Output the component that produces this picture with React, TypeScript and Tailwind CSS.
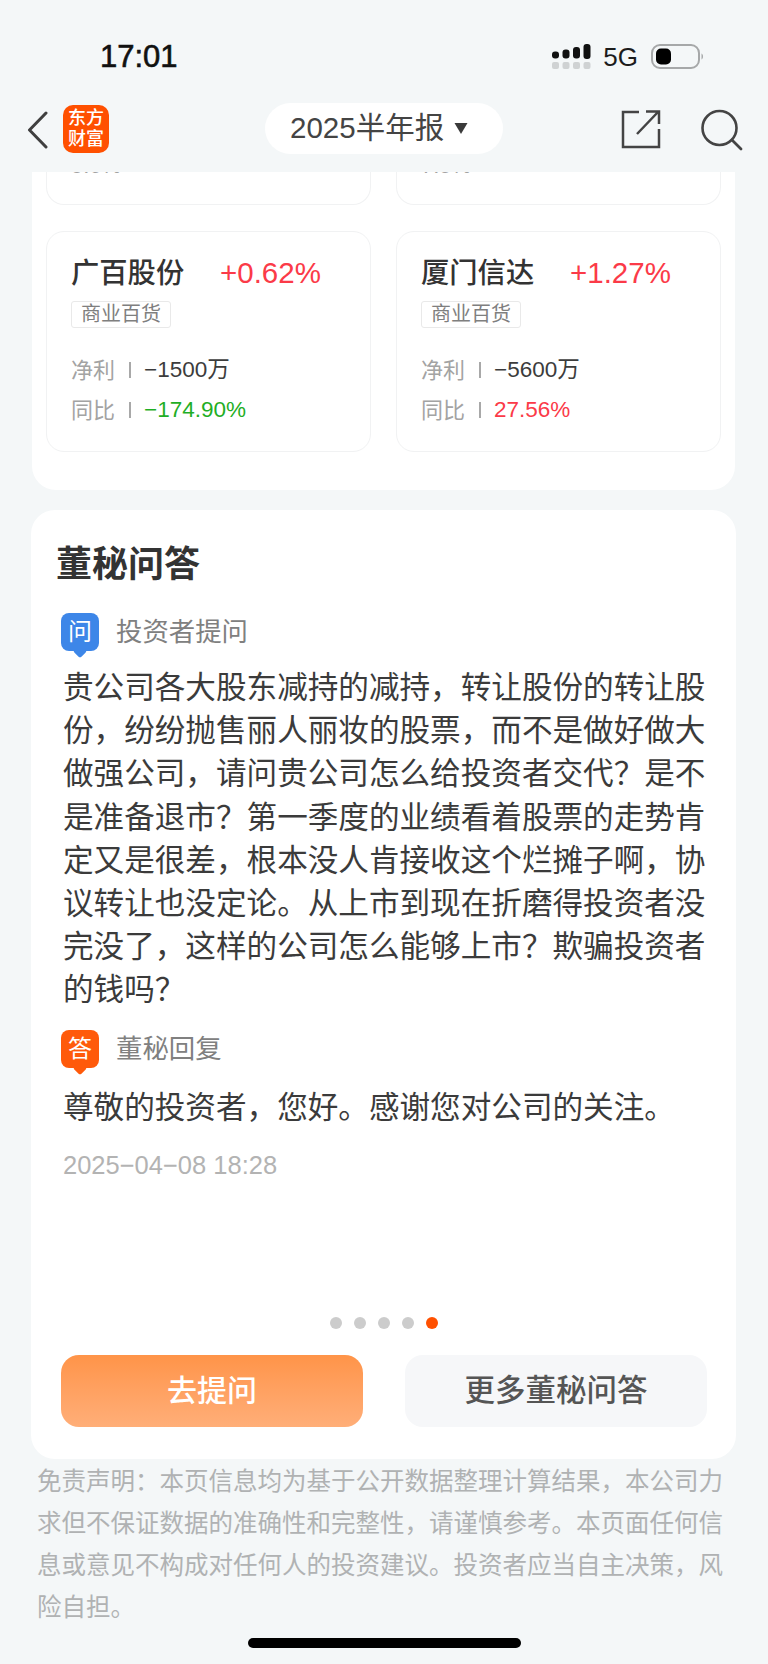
const FONT = "font-['Liberation_Sans','Noto_Sans_CJK_SC',sans-serif]";

const stocks = [
  { name: '广百股份', change: '+0.62%', profit: '−1500万', yoy: '−174.90%', yoyColor: 'text-[#1fae25]' },
  { name: '厦门信达', change: '+1.27%', profit: '−5600万', yoy: '27.56%', yoyColor: 'text-[#fb3a48]' },
];

function StockCard({ stock }: { stock: (typeof stocks)[number] }) {
  return (
    <div className="w-[325px] h-[221px] rounded-[18px] border border-[#f1f2f3] pl-[24px] pt-[24px]">
      <div className="flex items-center h-[34px]">
        <span className="w-[149px] text-[28.3px] leading-[34px] font-medium text-[#333333]">{stock.name}</span>
        <span className="text-[29.5px] leading-[34px] text-[#fb3a48]">{stock.change}</span>
      </div>
      <div className="mt-[11px] w-[100px] h-[27px] rounded-[3px] border border-[#e9e9e9] flex items-center justify-center text-[20px] leading-[25px] text-[#7f7f7f]">
        商业百货
      </div>
      <div className="mt-[22px] flex items-center h-[40px] text-[22.5px]">
        <span className="w-[44px] text-[22px] text-[#a3a3a3]">净利</span>
        <span className="ml-[14px] w-[2px] h-[16px] bg-[#a8a8a8]"></span>
        <span className="ml-[13px] text-[#3c3c3c]">{stock.profit}</span>
      </div>
      <div className="flex items-center h-[40px] text-[22.5px]">
        <span className="w-[44px] text-[22px] text-[#a3a3a3]">同比</span>
        <span className="ml-[14px] w-[2px] h-[16px] bg-[#a8a8a8]"></span>
        <span className={`ml-[13px] ${stock.yoyColor}`}>{stock.yoy}</span>
      </div>
    </div>
  );
}

function BubbleIcon({ char, color }: { char: string; color: string }) {
  return (
    <div className="relative w-[38px] h-[38px] shrink-0">
      <div className={`absolute left-[14px] top-[33px] w-[10px] h-[10px] rotate-45 rounded-[2px] ${color}`}></div>
      <div className={`relative w-[38px] h-[38px] rounded-[8px] flex items-center justify-center text-[24px] leading-none text-white ${color}`}>
        {char}
      </div>
    </div>
  );
}

export default function App() {
  return (
    <div className={`w-[768px] h-[1664px] overflow-hidden bg-[#f4f7f8] ${FONT}`}>
      {/* status bar */}
      <div className="h-[103px] pt-[38px] pl-[100px] pr-[64px] flex items-start justify-between">
        <span className="text-[31px] leading-[38px] font-medium text-[#111111] [-webkit-text-stroke:0.6px_#111111]">17:01</span>
        <div className="flex items-center h-[38px]">
          <svg width="39" height="30" viewBox="0 0 39 30" className="mt-[2px]">
            <rect x="0" y="8.5" width="7" height="7" rx="3" fill="#111" />
            <rect x="10.5" y="6.5" width="7" height="9" rx="3" fill="#111" />
            <rect x="21" y="4" width="7" height="11.5" rx="3" fill="#111" />
            <rect x="31.5" y="1" width="7" height="15" rx="3" fill="#111" />
            <rect x="0" y="19" width="7" height="7" rx="2" fill="#cfd2d3" />
            <rect x="10.5" y="19" width="7" height="7" rx="2" fill="#cfd2d3" />
            <rect x="21" y="19" width="7" height="7" rx="2" fill="#cfd2d3" />
            <rect x="31.5" y="19" width="7" height="7" rx="2" fill="#cfd2d3" />
          </svg>
          <span className="ml-[12px] text-[26px] leading-[30px] text-[#1c1c1c]">5G</span>
          <svg width="53" height="28" viewBox="0 0 53 28" className="ml-[13px]">
            <rect x="1" y="2" width="47" height="23" rx="8" fill="none" stroke="#a6a8a9" strokeWidth="2" />
            <rect x="5" y="5.5" width="15" height="16" rx="5" fill="#000" />
            <path d="M50.5 10.5 C52.5 11.5 52.5 15.5 50.5 16.5 Z" fill="#a6a8a9" />
          </svg>
        </div>
      </div>

      {/* nav bar */}
      <div className="h-[69px] flex items-start">
        <svg width="24" height="38" viewBox="0 0 24 38" className="ml-[26px] mt-[8px]">
          <path d="M20 2 L3.5 19 L20 36" fill="none" stroke="#3f3f3f" strokeWidth="3" strokeLinecap="round" strokeLinejoin="round" />
        </svg>
        <div className="ml-[13px] mt-[2px] w-[46px] h-[48px] rounded-[10px] bg-[#ff5000] flex flex-col items-center justify-center text-white text-[18px] leading-[21px] font-medium">
          <span>东方</span>
          <span>财富</span>
        </div>
        <div className="ml-[156px] w-[238px] h-[51px] rounded-full bg-white flex items-center pl-[25px] text-[29.5px] text-[#444444]">
          <span>2025半年报</span>
          <svg width="14" height="13" viewBox="0 0 14 13" className="ml-[10px]">
            <path d="M0.5 1 H13.5 L7 12 Z" fill="#3a3a3a" />
          </svg>
        </div>
        <svg width="40" height="40" viewBox="0 0 40 40" className="ml-[118px] mt-[6px]">
          <path d="M18 3 H2 V38 H38 V20" fill="none" stroke="#444" strokeWidth="2.5" />
          <path d="M16 25 L37 3 M25 2.5 H38 V15" fill="none" stroke="#444" strokeWidth="2.5" />
        </svg>
        <svg width="42" height="42" viewBox="0 0 42 42" className="ml-[40px] mt-[6px]">
          <circle cx="18.5" cy="19" r="17" fill="none" stroke="#444" strokeWidth="2.6" />
          <path d="M31 31 L40 40" fill="none" stroke="#444" strokeWidth="2.8" strokeLinecap="round" />
        </svg>
      </div>

      {/* stock panel, scrolled under the nav bar */}
      <div className="mx-[32px] w-[703px] h-[318px] bg-white rounded-b-[24px] pl-[14px] pr-[14px]">
        <div className="flex justify-between">
          {['5.6%', '7.5%'].map((v) => (
            <div key={v} className="w-[325px] h-[33px] overflow-hidden rounded-b-[18px] border border-t-0 border-[#f1f2f3] pl-[24px]">
              <div className="-mt-[17px] text-[22px] leading-[22px] text-[#a3a3a3]">{v}</div>
            </div>
          ))}
        </div>
        <div className="mt-[26px] flex justify-between">
          {stocks.map((s) => (
            <StockCard key={s.name} stock={s} />
          ))}
        </div>
      </div>

      {/* Q&A panel */}
      <div className="mt-[20px] mx-[31px] w-[705px] h-[949px] bg-white rounded-[24px] pl-[25px] pt-[33px]">
        <h2 className="text-[36px] leading-[44px] font-bold text-[#333333]">董秘问答</h2>
        <div className="mt-[26px] ml-[5px] flex items-center gap-[17px]">
          <BubbleIcon char="问" color="bg-[#3d86e8]" />
          <span className="text-[26.4px] leading-[38px] text-[#808080]">投资者提问</span>
        </div>
        <p className="mt-[15px] ml-[7px] w-[644px] text-[30.6px] leading-[43.2px] text-[#3b3b3b]">
          贵公司各大股东减持的减持，转让股份的转让股份，纷纷抛售丽人丽妆的股票，而不是做好做大做强公司，请问贵公司怎么给投资者交代？是不是准备退市？第一季度的业绩看着股票的走势肯定又是很差，根本没人肯接收这个烂摊子啊，协议转让也没定论。从上市到现在折磨得投资者没完没了，这样的公司怎么能够上市？欺骗投资者的钱吗？
        </p>
        <div className="mt-[18px] ml-[5px] flex items-center gap-[17px]">
          <BubbleIcon char="答" color="bg-[#ff5a0a]" />
          <span className="text-[26.4px] leading-[38px] text-[#808080]">董秘回复</span>
        </div>
        <p className="mt-[18px] ml-[7px] text-[30.6px] leading-[43px] text-[#3b3b3b]">
          尊敬的投资者，您好。感谢您对公司的关注。
        </p>
        <p className="mt-[21px] ml-[7px] text-[25.5px] leading-[30px] text-[#b3b3b3]">2025−04−08 18:28</p>

        <div className="mt-[137px] ml-[274px] flex gap-[12px]">
          {[0, 1, 2, 3].map((i) => (
            <span key={i} className="w-[12px] h-[12px] rounded-full bg-[#cccccc]"></span>
          ))}
          <span className="w-[12px] h-[12px] rounded-full bg-[#ff5000]"></span>
        </div>

        <div className="mt-[26px] ml-[5px] flex gap-[42px]">
          <button className="w-[302px] h-[72px] rounded-[18px] bg-gradient-to-b from-[#ff9448] to-[#ffae78] text-[30px] font-medium text-white">
            去提问
          </button>
          <button className="w-[302px] h-[72px] rounded-[18px] bg-[#f6f7f9] text-[30.5px] font-medium text-[#555555]">
            更多董秘问答
          </button>
        </div>
      </div>

      {/* disclaimer */}
      <p className="mt-[2px] ml-[37px] w-[688px] text-[24.5px] leading-[42px] text-[#b0b2b3]">
        免责声明：本页信息均为基于公开数据整理计算结果，本公司力求但不保证数据的准确性和完整性，请谨慎参考。本页面任何信息或意见不构成对任何人的投资建议。投资者应当自主决策，风险自担。
      </p>

      <div className="mt-[9px] mx-auto w-[273px] h-[10px] rounded-full bg-black"></div>
    </div>
  );
}
